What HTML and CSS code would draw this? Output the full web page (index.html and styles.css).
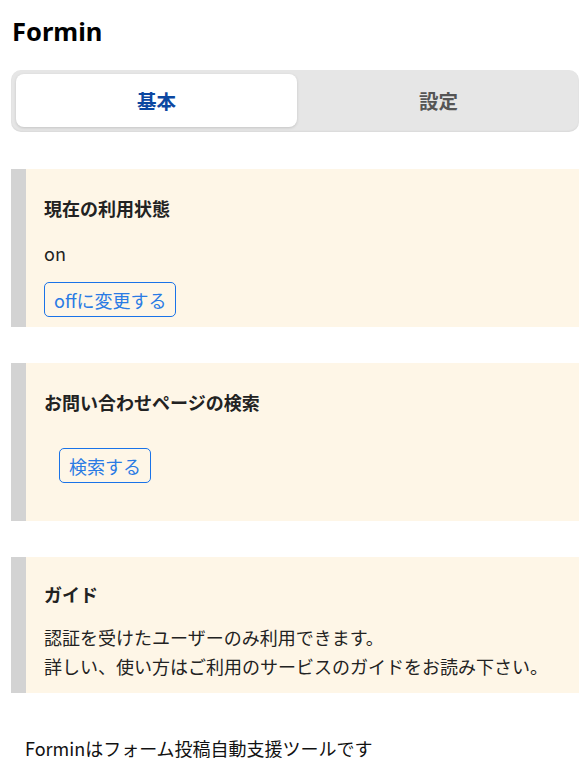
FILE: index.html
```html
<!DOCTYPE html>
<html lang="ja">
<head>
<meta charset="utf-8">
<title>Formin</title>
<link rel="stylesheet" href="styles.css">
</head>
<body>
<div class="page">
  <h1 class="title">Formin</h1>
  <div class="tabs">
    <div class="tab tab-active">基本</div>
    <div class="tab">設定</div>
  </div>

  <section class="card card-status">
    <h3 class="card-title">現在の利用状態</h3>
    <p class="card-text">on</p>
    <button class="btn btn-status">offに変更する</button>
  </section>

  <section class="card card-search">
    <h3 class="card-title">お問い合わせページの検索</h3>
    <div class="search-wrap">
      <button class="btn">検索する</button>
    </div>
  </section>

  <section class="card card-guide">
    <h3 class="card-title">ガイド</h3>
    <p class="card-text">認証を受けたユーザーのみ利用できます。<br>詳しい、使い方はご利用のサービスのガイドをお読み下さい。</p>
  </section>

  <p class="footer">Forminはフォーム投稿自動支援ツールです</p>
</div>
</body>
</html>
```

FILE: styles.css
```css
html, body {
  margin: 0;
  padding: 0;
  background: #ffffff;
}
body {
  font-family: "Noto Sans CJK JP", "Noto Sans", sans-serif;
  color: #222222;
  font-size: 18px;
}
.page {
  padding: 15px 0 0 11px;
}
.title {
  margin: 0 0 23px 1px;
  font-size: 25.5px;
  line-height: 32px;
  font-weight: 700;
  color: #000000;
  font-family: "Noto Sans", "Noto Sans CJK JP", sans-serif;
}
.tabs {
  display: grid;
  grid-template-columns: 1fr 1fr;
  gap: 1px;
  padding: 4px 0 5px 5px;
  background: #e6e6e6;
  border-radius: 10px;
  box-shadow: inset 0 -1px 2px rgba(0,0,0,0.06);
  margin-bottom: 37px;
}
.tab {
  height: 53px;
  display: flex;
  align-items: center;
  justify-content: center;
  font-size: 19.5px;
  line-height: 24px;
  font-weight: 700;
  color: #555555;
}
.tab-active {
  background: #ffffff;
  border-radius: 8px;
  color: #0c47a1;
  box-shadow: 0 1px 3px rgba(0,0,0,0.15);
}
.card {
  background: #fef6e7;
  border-left: 15px solid #d3d3d3;
  padding: 27px 18px 0 18px;
  margin-bottom: 36px;
}
.card-title {
  margin: 0 0 19px 0;
  font-size: 18px;
  line-height: 24px;
  font-weight: 700;
  color: #222222;
}
.card-text {
  margin: 0;
  font-size: 18px;
  line-height: 29px;
  color: #222222;
}
.btn {
  font-family: "Noto Sans CJK JP", "Noto Sans", sans-serif;
  font-size: 18px;
  line-height: 22px;
  height: 35px;
  padding: 0 9px;
  background: transparent;
  color: #2a7be4;
  border: 1px solid #1a73e8;
  border-radius: 5px;
  display: block;
}
.card-status {
  padding-bottom: 10px;
}
.btn-status {
  margin-top: 14px;
}
.search-wrap {
  padding: 15px 15px 38px;
  margin-top: 16px;
}
.card-guide {
  padding-top: 25px;
  padding-bottom: 12px;
}
.card-guide .card-title {
  margin-bottom: 17px;
}
.footer {
  margin: 43px 0 0 14px;
  font-size: 18px;
  line-height: 24px;
  color: #111111;
}
```
